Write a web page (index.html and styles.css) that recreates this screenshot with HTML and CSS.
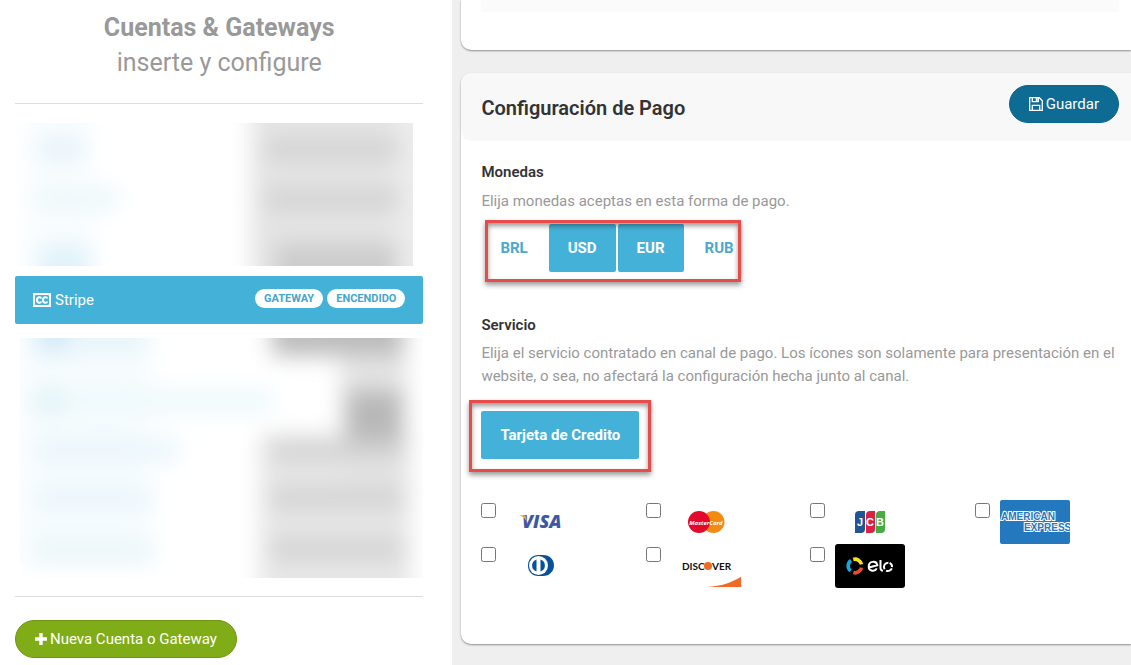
FILE: index.html
```html
<!DOCTYPE html>
<html lang="es">
<head>
<meta charset="utf-8">
<title>Cuentas &amp; Gateways</title>
<link rel="stylesheet" href="styles.css">
</head>
<body>
<div class="layout">
  <aside class="sidebar">
    <header class="side-head">
      <h1>Cuentas &amp; Gateways</h1>
      <p>inserte y configure</p>
    </header>
    <hr class="rule">
    <svg class="veil veil-top" viewBox="0 0 398 143" preserveAspectRatio="none" aria-hidden="true">
      <defs>
        <filter id="soft" x="-50%" y="-50%" width="200%" height="200%"><feGaussianBlur stdDeviation="11"/></filter>
      </defs>
      <g filter="url(#soft)">
        <rect x="8" y="-30" width="72" height="210" fill="#f9fdfe"/>
        <rect x="24" y="14" width="44" height="24" fill="#e6f3fa"/>
        <rect x="20" y="64" width="84" height="24" fill="#eef8fb"/>
        <rect x="24" y="122" width="50" height="40" fill="#dff2f9"/>
        <rect x="236" y="-40" width="146" height="230" fill="#e4e4e4"/>
        <rect x="380" y="-40" width="60" height="230" fill="#ececec"/>
        <rect x="250" y="16" width="134" height="20" fill="#d2d2d2"/>
        <rect x="250" y="66" width="134" height="20" fill="#d2d2d2"/>
        <rect x="260" y="120" width="122" height="50" fill="#cccccc"/>
      </g>
    </svg>
    <div class="account">
      <svg class="cc" viewBox="0 0 18 14" aria-hidden="true"><path fill="#fff" d="M0 0h18v14H0z"/><rect x="2" y="2" width="14" height="10" rx="1" fill="#44b2d8"/><path d="M8.200 5.600C7.700 3.700 4 3.700 4 7s3.700 3.300 4.200 1.400M14.200 5.600C13.700 3.700 10 3.700 10 7s3.700 3.300 4.200 1.400" fill="none" stroke="#fff" stroke-width="2"/></svg>
      <span class="account-name">Stripe</span>
      <span class="tag">GATEWAY</span>
      <span class="tag">ENCENDIDO</span>
    </div>
    <svg class="veil veil-bottom" viewBox="0 0 403 240" preserveAspectRatio="none" aria-hidden="true">
      <g filter="url(#soft)">
        <rect x="0" y="-30" width="130" height="260" fill="#f7fcfe"/>
        <rect x="16" y="-18" width="32" height="34" fill="#d4eaf7"/>
        <rect x="48" y="-18" width="80" height="34" fill="#e8f5fa"/>
        <rect x="16" y="50" width="236" height="26" fill="#eff9fc"/>
        <rect x="14" y="52" width="30" height="22" fill="#dff2f7"/>
        <rect x="14" y="100" width="146" height="24" fill="#ebf6fc"/>
        <rect x="14" y="148" width="120" height="24" fill="#ebf6fc"/>
        <rect x="14" y="200" width="120" height="24" fill="#ebf6fa"/>
        <rect x="240" y="96" width="150" height="180" fill="#e6e6e6"/>
        <rect x="320" y="-30" width="66" height="180" fill="#e4e4e4"/>
        <rect x="252" y="-30" width="130" height="48" fill="#bcbcbc"/>
        <rect x="326" y="52" width="56" height="62" fill="#b8b8b8"/>
        <rect x="250" y="102" width="130" height="20" fill="#d2d2d2"/>
        <rect x="250" y="150" width="132" height="20" fill="#d2d2d2"/>
        <rect x="250" y="201" width="132" height="20" fill="#d2d2d2"/>
      </g>
    </svg>
    <hr class="rule">
    <button class="btn btn-green" type="button">
      <svg class="plus" viewBox="0 0 12 12" aria-hidden="true"><path fill="#fff" d="M4.300 0h3.400v4.300H12v3.400H7.700V12H4.300V7.700H0V4.300h4.300z"/></svg>
      Nueva Cuenta o Gateway
    </button>
  </aside>

  <main class="content">
    <section class="card card-prev"><div class="prev-fill"></div></section>
    <section class="card">
      <header class="card-head">
        <h2>Configuración de Pago</h2>
        <button class="btn btn-blue" type="button">
          <svg class="floppy" viewBox="0 0 14 14" aria-hidden="true"><path d="M.7.700h9.600l3 3v9.600H.7zM3.300.700v4h6v-4M3.300 13.300V8.300h7.400v5" fill="none" stroke="#fff" stroke-width="1.300"/><path d="M6.800 1h1.800v3H6.800z" fill="#fff"/></svg>
          Guardar
        </button>
      </header>
      <div class="card-body">
        <h3>Monedas</h3>
        <p class="hint">Elija monedas aceptas en esta forma de pago.</p>
        <div class="choices">
          <button class="choice" type="button" aria-pressed="false">BRL</button>
          <button class="choice on" type="button" aria-pressed="true">USD</button>
          <button class="choice on" type="button" aria-pressed="true">EUR</button>
          <button class="choice" type="button" aria-pressed="false">RUB</button>
          <span class="frame frame-currency"></span>
        </div>
        <h3 class="second">Servicio</h3>
        <p class="hint">Elija el servicio contratado en canal de pago. Los ícones son solamente para presentación en el website, o sea, no afectará la configuración hecha junto al canal.</p>
        <div class="choices service">
          <button class="choice on" type="button" aria-pressed="true">Tarjeta de Credito</button>
          <span class="frame frame-service"></span>
        </div>
        <div class="brands">
          <label class="brand"><input type="checkbox" aria-label="Visa">
            <svg viewBox="0 0 70 44"><text class="visa" x="16" y="28">VISA</text><path d="M13 15.300h5.200c1 0 1.500.4 1.700 1.400l1 5.300c-1.500-3.200-4-5.600-7.900-6.700z" fill="#f0a340"/></svg></label>
          <label class="brand"><input type="checkbox" aria-label="MasterCard">
            <svg viewBox="0 0 70 44"><circle cx="42.500" cy="22" r="11" fill="#f38b13"/><circle cx="28" cy="22" r="11" fill="#e3092c"/><text class="master" x="35" y="24.500" text-anchor="middle">MasterCard</text></svg></label>
          <label class="brand"><input type="checkbox" aria-label="JCB">
            <svg viewBox="0 0 70 44"><path d="M20 15q0-4 4-4h6v18q0 4-4 4h-6z" fill="#205493"/><path d="M31 15q0-4 4-4h5v18q0 4-4 4h-5z" fill="#dc1f45"/><path d="M41 15q0-4 4-4h5v18q0 4-4 4h-5z" fill="#47aa42"/><text class="jcb" x="22" y="26">J</text><text class="jcb" x="31" y="26">C</text><text class="jcb" x="41" y="26">B</text></svg></label>
          <label class="brand"><input type="checkbox" aria-label="American Express">
            <svg viewBox="0 0 70 44"><rect width="70" height="44" rx="2" fill="#2478bd"/><text class="amex" x="1" y="20">AMERICAN</text><text class="amex" x="24" y="31">EXPRESS</text></svg></label>
          <label class="brand"><input type="checkbox" aria-label="Diners Club">
            <svg viewBox="0 0 70 44"><path d="M32.500 11H37c7 0 11 5 11 10.500S43.500 32 37 32h-4.500C26 32 22 27.500 22 21.500S26 11 32.500 11z" fill="#07509c"/><circle cx="32.500" cy="21.500" r="9.500" fill="#fff"/><path d="M30.500 15.500v12a6.300 6.300 0 0 1 0-12zM34.500 15.500v12a6.300 6.300 0 0 0 0-12z" fill="#07509c"/></svg></label>
          <label class="brand"><input type="checkbox" aria-label="Discover">
            <svg viewBox="0 0 70 44"><text class="discover" x="11" y="26">DISC</text><text class="discover" x="41" y="26">VER</text><circle cx="37" cy="22" r="4" fill="#ee6b25"/><path d="M36 43c15-1 26-5 35-11v9q0 2-2 2z" fill="#f26b26"/></svg></label>
          <label class="brand"><input type="checkbox" aria-label="Elo">
            <svg viewBox="0 0 70 44"><rect width="70" height="44" rx="3" fill="#000"/><g fill="none" stroke-width="3.600"><path d="M18.300 15.400a6.700 6.700 0 0 1 8.200 5" stroke="#fce320"/><path d="M16 16.500a6.700 6.700 0 0 0-.5 10.500" stroke="#16a8e0"/><path d="M26.500 23.600a6.700 6.700 0 0 1-8.200 5" stroke="#ee4a2b"/></g><g fill="none" stroke="#fff" stroke-width="2"><path d="M34 23.500l8.300-2.300c-.8-5-8.600-4.300-8.600 1.300 0 5 6.300 5.500 8.100 1.900M45.500 16v8c0 1.700.8 2.500 2.300 3"/><path d="M49.600 25.200a4.200 4.200 0 0 1 3.800-6.500M54.600 18.900a4.200 4.200 0 0 1 2.400 4.200M56.800 24.300a4.200 4.200 0 0 1-5.700 2.300"/></g></svg></label>
        </div>
      </div>
    </section>
  </main>
</div>
</body>
</html>
```
FILE: styles.css
```css
* { box-sizing: border-box; }

body {
  margin: 0;
  background: #efefef;
  color: #333;
  font: 15px/23px Roboto, "Liberation Sans", sans-serif;
}

h1, h2, h3, p { margin: 0; }

.layout {
  display: grid;
  grid-template-columns: 40% 60%;
  min-height: 100vh;
  overflow: hidden;
}

.sidebar {
  background: #fff;
  padding: 10px 29px 7px 15px;
}

.side-head {
  color: #999;
  font-size: 25px;
  line-height: 35px;
  text-align: center;
}

.side-head h1 {
  font-size: 25px;
  font-weight: 700;
}

.rule {
  height: 1px;
  margin: 0;
  border: 0;
  background: #ddd;
}

.side-head + .rule { margin-top: 23px; }

.veil {
  display: block;
  overflow: hidden;
}

.veil-top {
  width: calc(100% - 10px);
  height: 143px;
  margin: 19px 0 10px;
}

.veil-bottom {
  width: calc(100% - 5px);
  height: 240px;
  margin: 14px 0 18px 5px;
}

.account {
  display: flex;
  align-items: center;
  gap: 4px;
  height: 48px;
  padding: 0 18px;
  border-radius: 2px;
  background: #44b2d8;
  color: #fff;
}

.cc { width: 18px; height: 14px; }

.account-name { margin-right: auto; }

.tag {
  margin-bottom: 3px;
  padding: 0 9px;
  border-radius: 10px;
  background: #fff;
  color: #44a6cc;
  font-size: 11px;
  font-weight: 700;
  line-height: 19px;
}

.btn {
  display: inline-flex;
  align-items: center;
  gap: 3px;
  height: 38px;
  padding: 0 19px;
  border: 1px solid;
  border-radius: 19px;
  color: #fff;
  font: inherit;
}

.btn-green {
  margin-top: 23px;
  border-color: #70960f;
  background: #80ac17;
}

.btn-blue {
  border-color: #0b678e;
  background: #0d6b94;
}

.plus { width: 12px; height: 12px; }
.floppy { width: 14px; height: 14px; }

.content {
  min-width: 0;
  padding-left: 9px;
}

.card {
  border-radius: 10px 0 0 10px;
  background: #fff;
  box-shadow: 0 1px 2px rgba(0, 0, 0, 0.4);
}

.card-prev {
  height: 50px;
  margin-bottom: 23px;
  padding: 0 12px 0 20px;
  border-top-left-radius: 0;
}

.prev-fill {
  height: 12px;
  background: #fbfbfb;
}

.card-head {
  display: flex;
  align-items: center;
  justify-content: space-between;
  height: 68px;
  padding: 0 12px 6px 20px;
  border-radius: 10px 0 0 10px;
  background: #f8f8f8;
}

.card-head h2 {
  padding-top: 8px;
  font-size: 20px;
  font-weight: 600;
  line-height: 28px;
}

.card-body { padding: 20px 12px 56px 20px; }

.card-body h3 {
  margin-bottom: 6px;
  font-size: 15px;
  font-weight: 600;
  line-height: 23px;
}

.card-body h3.second {
  margin-top: 42px;
  margin-bottom: 5px;
}

.hint { color: #999; }

.choices {
  position: relative;
  display: flex;
  gap: 2px;
  margin-top: 11px;
}

.service { margin-top: 23px; }

.choice {
  height: 48px;
  padding: 0 19px;
  border: 0;
  border-radius: 2px;
  background: transparent;
  color: #4aa9cc;
  font: inherit;
  font-weight: 700;
}

.choice.on {
  background: #44b2d8;
  color: #fff;
}

/* Highlight outlines laid over the controls */
.frame {
  position: absolute;
  border: 3px solid #e94b4b;
  box-shadow: 0 3px 5px rgba(0, 0, 0, 0.4), inset 0 3px 5px rgba(0, 0, 0, 0.4);
  pointer-events: none;
}

.frame-currency {
  top: -4px;
  left: 4px;
  width: 256px;
  height: 62px;
}

.frame-service {
  top: -11px;
  left: -12px;
  width: 182px;
  height: 72px;
}

.brands {
  display: grid;
  grid-template-columns: repeat(4, 1fr);
  margin: 41px -20px 0 0;
}

.brand {
  display: flex;
  align-items: flex-start;
  gap: 10px;
}

.brand input {
  width: 15px;
  height: 15px;
  margin: 3px 0 0;
}

.brand svg {
  display: block;
  width: 70px;
  height: 44px;
}

.visa {
  fill: #3c58a5;
  font: italic 800 18px "Open Sans", sans-serif;
}

.master {
  fill: #fff;
  font: italic 700 6px "Open Sans", sans-serif;
}

.jcb {
  fill: #fff;
  font: 700 11px "Liberation Sans", sans-serif;
}

.amex {
  fill: #2478bd;
  stroke: #fff;
  stroke-width: 2px;
  paint-order: stroke;
  font: 700 10px "Liberation Sans", sans-serif;
}

.discover {
  fill: #111;
  font: 700 10px Lato, sans-serif;
}
```
